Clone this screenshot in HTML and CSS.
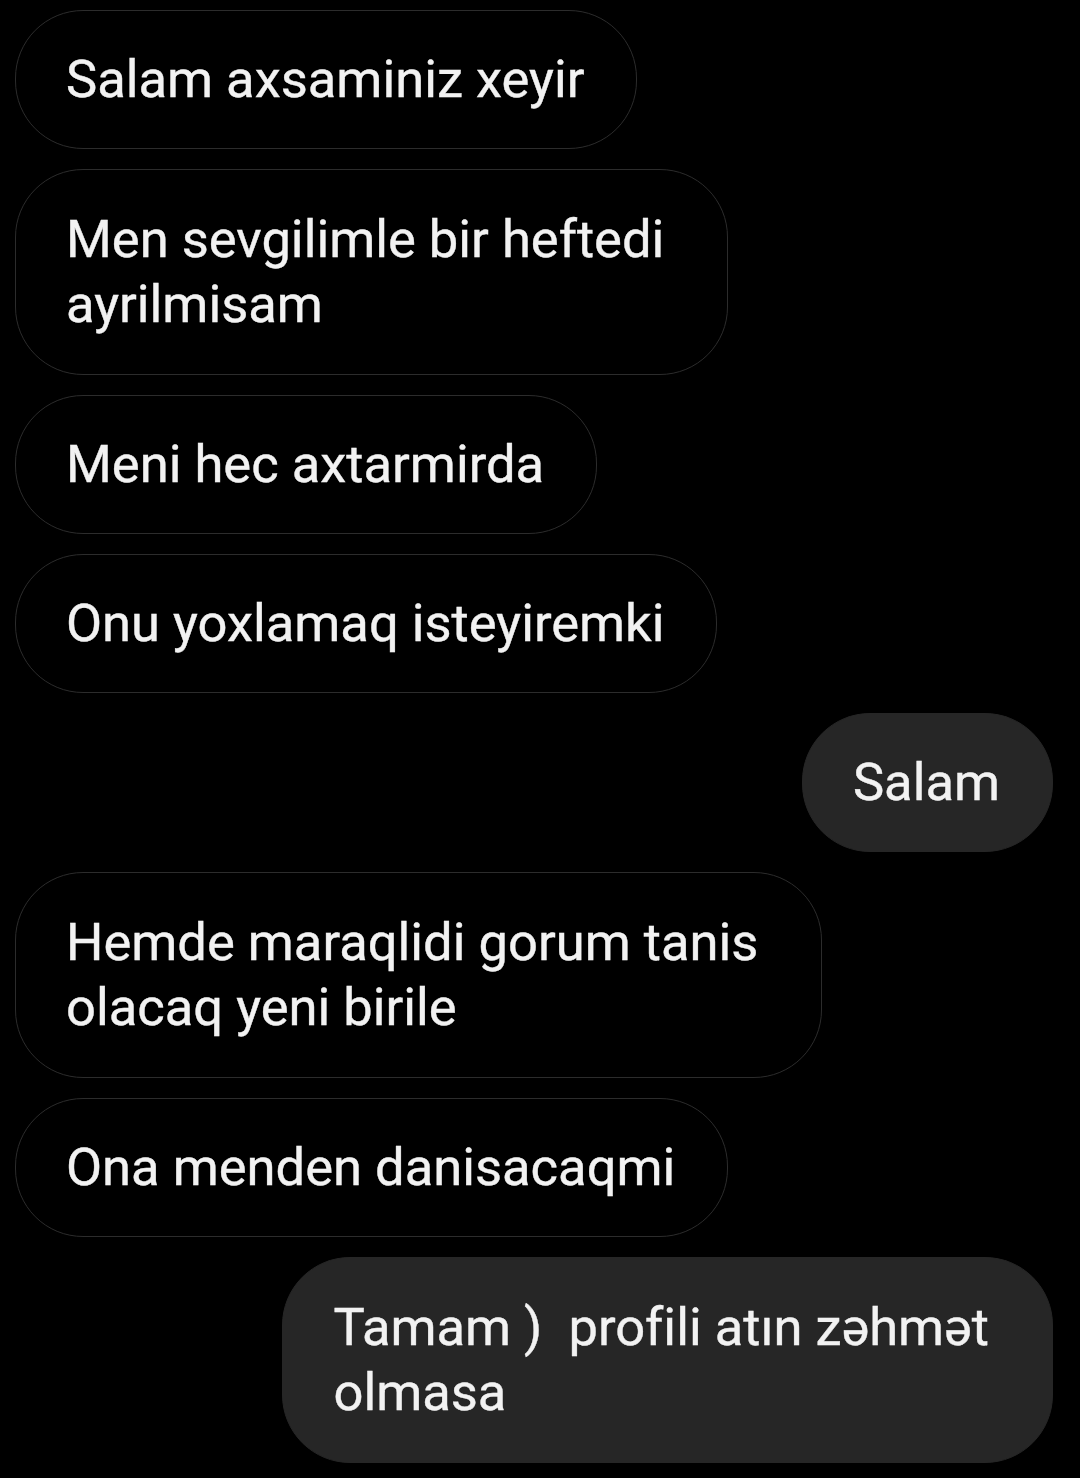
FILE: index.html
```html
<!DOCTYPE html>
<html lang="az">
<head>
<meta charset="utf-8">
<title>Chat</title>
<link rel="stylesheet" href="styles.css">
</head>
<body>
<main class="chat">
  <div class="msg in">Salam axsaminiz xeyir</div>
  <div class="msg in multi">Men sevgilimle bir heftedi<br>ayrilmisam</div>
  <div class="msg in">Meni hec axtarmirda</div>
  <div class="msg in">Onu yoxlamaq isteyiremki</div>
  <div class="msg out">Salam</div>
  <div class="msg in multi">Hemde maraqlidi gorum tanis<br>olacaq yeni birile</div>
  <div class="msg in">Ona menden danisacaqmi</div>
  <div class="msg out multi">Tamam )&nbsp; profili atın zəhmət<br>olmasa</div>
</main>
</body>
</html>
```

FILE: styles.css
```css
html, body {
  margin: 0;
  padding: 0;
  background: #000;
}

body {
  width: 1080px;
  height: 1478px;
  overflow: hidden;
  font-family: Roboto, "Noto Sans", Arial, sans-serif;
}

.chat {
  display: flex;
  flex-direction: column;
  gap: 20px;
  padding: 10px 27px 0 15px;
}

.msg {
  box-sizing: border-box;
  padding: 36px 52px 36px 50px;
  border-radius: 68px;
  font-size: 52.5px;
  line-height: 65px;
  color: #f2f2f2;
  white-space: nowrap;
  -webkit-text-stroke: 0.4px #f2f2f2;
}

.msg.multi {
  padding-top: 37px;
  padding-bottom: 37px;
  padding-right: 63px;
}

.in {
  align-self: flex-start;
  border: 1px solid #2c2c2c;
  background: #000;
}

.out {
  align-self: flex-end;
  border: 1px solid #262626;
  background: #262626;
}
```
